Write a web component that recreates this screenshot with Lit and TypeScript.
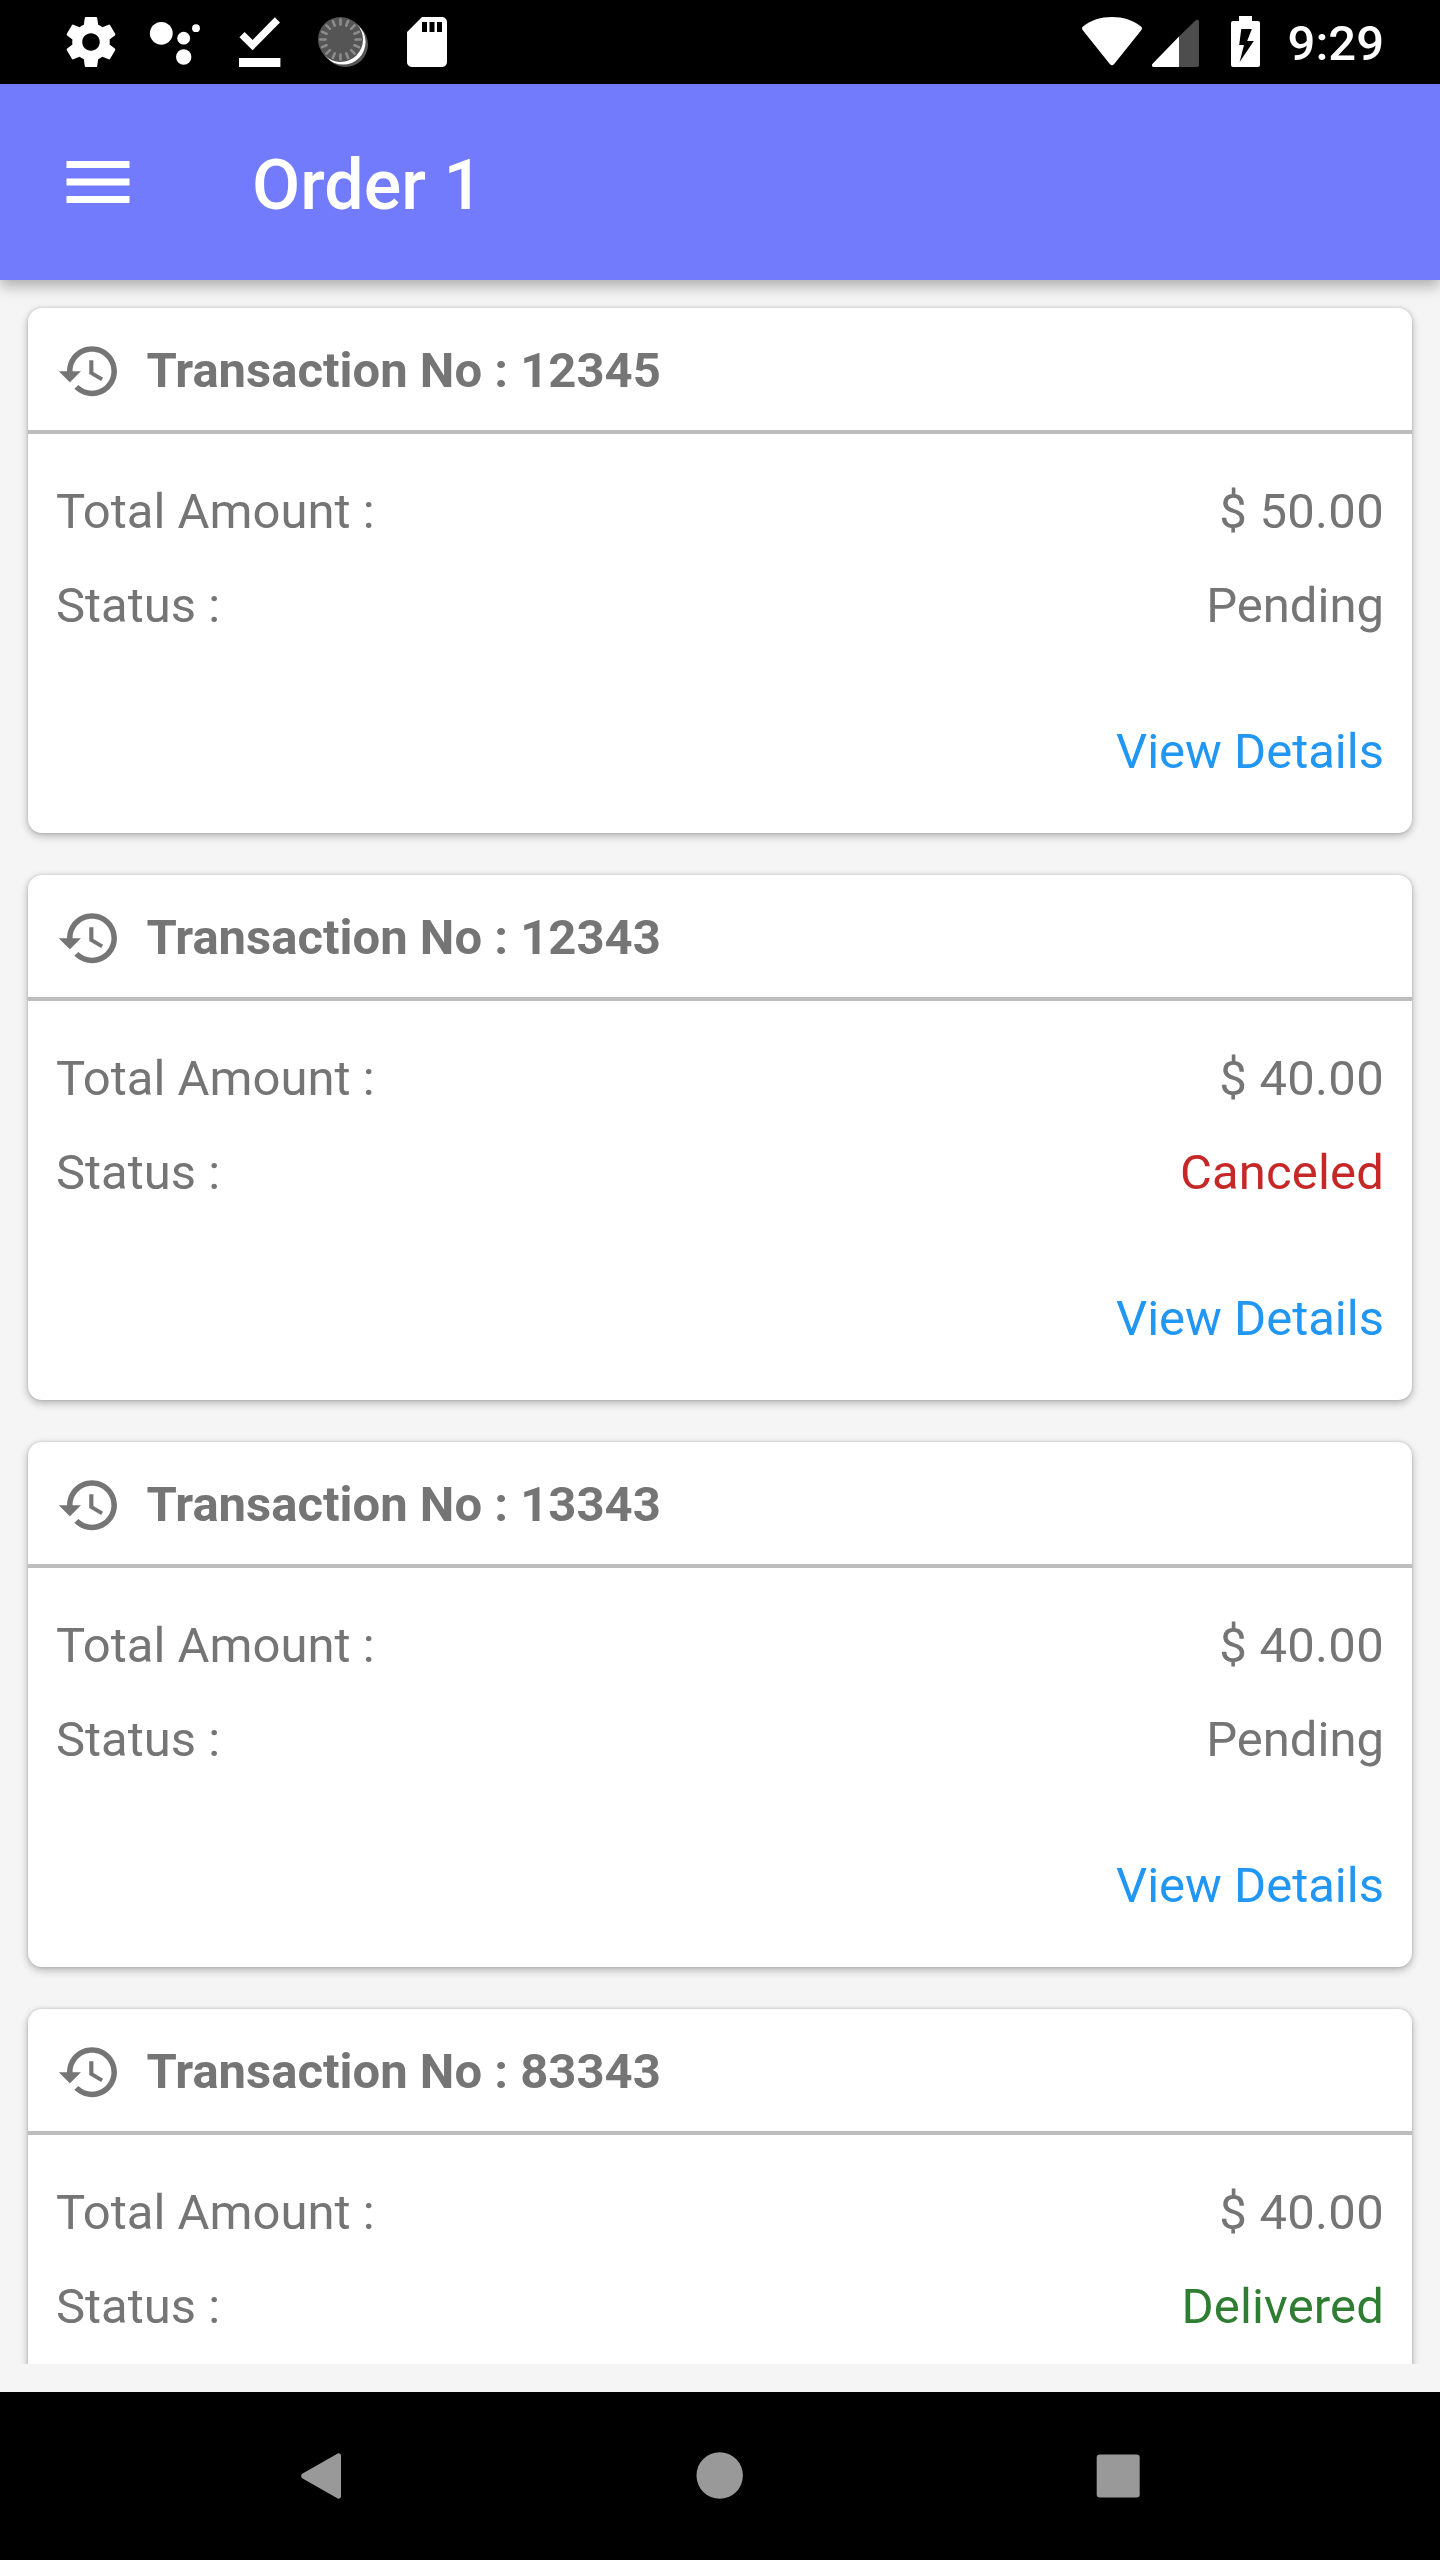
import { LitElement, html, css, svg } from "lit";
import { customElement, property } from "lit/decorators.js";
import { classMap } from "lit/directives/class-map.js";

type Status = "Pending" | "Canceled" | "Delivered";

interface Order {
  no: string;
  amount: string;
  status: Status;
}

const ORDERS: Order[] = [
  { no: "12345", amount: "50.00", status: "Pending" },
  { no: "12343", amount: "40.00", status: "Canceled" },
  { no: "13343", amount: "40.00", status: "Pending" },
  { no: "83343", amount: "40.00", status: "Delivered" },
];

const TICKS = Array.from({ length: 16 }, (_, i) => i * 22.5);

@customElement("status-bar")
class StatusBar extends LitElement {
  static styles = css`
    :host {
      display: flex;
      justify-content: space-between;
      height: 84px;
      padding: 0 56px 0 61px;
      box-sizing: border-box;
      background: #000;
      color: #fff;
    }
    svg {
      display: block;
      flex: none;
    }
    .group {
      display: flex;
      align-items: center;
    }
    .left {
      gap: 24px;
    }
    .cell {
      margin-left: 10px;
    }
    .battery {
      margin-left: 32px;
    }
    .time {
      margin-left: 28px;
      padding-top: 3px;
      font: 500 49px/57px Roboto, sans-serif;
    }
  `;

  render() {
    return html`
      <div class="group left">
        <svg width="60" height="60" viewBox="0 0 24 24" fill="#fff">
          <path
            d="M19.43 12.98c.04-.32.07-.64.07-.98s-.03-.66-.07-.98l2.11-1.65c.19-.15.24-.42.12-.64l-2-3.46c-.12-.22-.39-.3-.61-.22l-2.49 1c-.52-.4-1.08-.73-1.69-.98l-.38-2.65C14.46 2.18 14.25 2 14 2h-4c-.25 0-.46.18-.49.42l-.38 2.65c-.61.25-1.17.59-1.69.98l-2.49-1c-.23-.09-.49 0-.61.22l-2 3.46c-.13.22-.07.49.12.64l2.11 1.65c-.04.32-.07.65-.07.98s.03.66.07.98l-2.11 1.65c-.19.15-.24.42-.12.64l2 3.46c.12.22.39.3.61.22l2.49-1c.52.4 1.08.73 1.69.98l.38 2.65c.03.24.24.42.49.42h4c.25 0 .46-.18.49-.42l.38-2.65c.61-.25 1.17-.59 1.69-.98l2.49 1c.23.09.49 0 .61-.22l2-3.46c.12-.22.07-.49-.12-.64l-2.11-1.65zM12 15.5c-1.93 0-3.5-1.57-3.5-3.5s1.57-3.5 3.5-3.5 3.5 1.57 3.5 3.5-1.57 3.5-3.5 3.5z"
          />
        </svg>
        <svg width="60" height="60" viewBox="0 0 60 60" fill="#fff">
          <circle cx="16.3" cy="21.3" r="11.4" />
          <circle cx="38.7" cy="26.2" r="6.4" />
          <circle cx="51" cy="16.2" r="3.9" />
          <circle cx="38.7" cy="45" r="7.7" />
        </svg>
        <svg width="60" height="60" viewBox="0 0 60 60" fill="#fff">
          <path d="M10.4 25.2 15.6 20 23.6 28 45.8 5.2 51 10.4 23.6 38.2zM10 46h41.4v9H10z" />
        </svg>
        <svg width="60" height="60" viewBox="0 0 60 60">
          <circle cx="32.5" cy="32.5" r="22.5" fill="#555" />
          <circle cx="30" cy="30" r="22.6" fill="#fff" />
          <circle cx="27.5" cy="27.5" r="22.5" fill="#555" />
          <g stroke="#8c8c8c" stroke-width="2.6" stroke-linecap="round">
            ${TICKS.map(
              (a) => svg`<path d="M27.5 7.500v5" transform=${`rotate(${a} 27.5 27.5)`} />`
            )}
          </g>
        </svg>
        <svg width="60" height="60" viewBox="0 0 24 24" fill="#fff">
          <path
            d="M18 2h-8L4.02 8 4 20c0 1.1.9 2 2 2h12c1.1 0 2-.9 2-2V4c0-1.1-.9-2-2-2zm-6 6h-2V4h2v4zm3 0h-2V4h2v4zm3 0h-2V4h2v4z"
          />
        </svg>
      </div>
      <div class="group">
        <svg width="60" height="50" viewBox="0 0 60 50" fill="#fff">
          <path d="M1 9.400C9 3.200 19 0 30 0s21 3.200 29 9.400c1.200 1 1.300 2.400.4 3.600L32 47.300c-1.100 1.400-2.900 1.400-4 0L.6 13c-.9-1.200-.8-2.600.4-3.600z" />
        </svg>
        <svg class="cell" width="47" height="50" viewBox="0 0 47 50">
          <path d="M47 5v43a2 2 0 0 1-2 2H27V19.500L43.500 3.500C45 2.200 47 3 47 5z" fill="#4d4d4d" />
          <path d="M27 19.500V50H1.800c-1.800 0-2.500-2-1.200-3.300z" fill="#fff" />
        </svg>
        <svg class="battery" width="29" height="52" viewBox="0 0 29 52">
          <path d="M8 0h13v5h6a2 2 0 0 1 2 2v42a2 2 0 0 1-2 2H2a2 2 0 0 1-2-2V7a2 2 0 0 1 2-2h6z" fill="#fff" />
          <path d="M10.300 13h10.500l-4.600 12h6.600L8.600 46l4.400-17H8.200z" fill="#000" />
        </svg>
        <span class="time">9:29</span>
      </div>
    `;
  }
}

@customElement("order-card")
class OrderCard extends LitElement {
  static styles = css`
    :host {
      display: block;
      flex: none;
      height: 525px;
      border-radius: 14px;
      background: #fff;
      color: #757575;
      font: 400 49px/58px Roboto, sans-serif;
      box-shadow: 0 3px 8px rgba(0, 0, 0, 0.28), 0 0 3px rgba(0, 0, 0, 0.16);
    }
    .head {
      display: flex;
      align-items: center;
      gap: 24px;
      height: 126px;
      padding: 4px 28px 0;
      box-sizing: border-box;
      border-bottom: 4px solid #bdbdbd;
      font-weight: 700;
    }
    .head svg {
      flex: none;
    }
    .body {
      display: flex;
      flex-direction: column;
      gap: 36px;
      padding: 49px 28px 0;
    }
    .row {
      display: flex;
      justify-content: space-between;
    }
    .link {
      align-self: flex-end;
      margin-top: 52px;
      color: #2196f3;
    }
    .amount {
      letter-spacing: 0.3px;
    }
    .canceled {
      color: #c62828;
      letter-spacing: 0.15px;
    }
    .delivered {
      color: #2e7d32;
      letter-spacing: 0.15px;
    }
  `;

  @property({ attribute: false }) order!: Order;

  render() {
    const { no, amount, status } = this.order;
    return html`
      <div class="head">
        <svg width="66.5" height="66.5" viewBox="0 0 24 24" fill="#757575">
          <path
            d="M13 3c-4.970 0-9 4.030-9 9H1l3.890 3.890.07.14L9 12H6c0-3.870 3.130-7 7-7s7 3.130 7 7-3.130 7-7 7c-1.930 0-3.680-.79-4.940-2.060l-1.420 1.420C8.270 19.990 10.510 21 13 21c4.970 0 9-4.030 9-9s-4.030-9-9-9zm-1 5v5l4.280 2.540.72-1.210-3.500-2.080V8H12z"
          />
        </svg>
        <span>Transaction No : ${no}</span>
      </div>
      <div class="body">
        <div class="row"><span>Total Amount :</span><span class="amount">$ ${amount}</span></div>
        <div class="row">
          <span>Status :</span>
          <span
            class=${classMap({
              canceled: status === "Canceled",
              delivered: status === "Delivered",
            })}
            >${status}</span
          >
        </div>
        <span class="link">View Details</span>
      </div>
    `;
  }
}

@customElement("nav-bar")
class NavBar extends LitElement {
  static styles = css`
    :host {
      display: flex;
      align-items: center;
      justify-content: center;
      gap: 338px;
      height: 168px;
      background: #000;
    }
    svg {
      display: block;
    }
  `;

  render() {
    return html`
      <svg width="60" height="60" viewBox="0 0 60 60" fill="#999">
        <path d="M45.300 7.800C47 6.800 49 7.600 49 9.800v40.400c0 2.200-2 3-3.700 2L10.600 32.400c-2-1.200-2-3.600 0-4.800z" />
      </svg>
      <svg width="60" height="60" viewBox="0 0 60 60" fill="#999">
        <circle cx="29.700" cy="29.500" r="23.200" />
      </svg>
      <svg width="60" height="60" viewBox="0 0 60 60" fill="#999">
        <rect x="8.700" y="8.400" width="43" height="43" rx="3" />
      </svg>
    `;
  }
}

@customElement("app-root")
class AppRoot extends LitElement {
  static styles = css`
    :host {
      display: flex;
      flex-direction: column;
      width: 1440px;
      height: 2560px;
      overflow: hidden;
      background: #f5f5f5;
    }
    .appbar {
      display: flex;
      align-items: center;
      gap: 112px;
      flex: none;
      height: 196px;
      padding: 0 56px;
      box-sizing: border-box;
      background: #727bfb;
      color: #fff;
      box-shadow: 0 6px 14px rgba(0, 0, 0, 0.3);
      z-index: 1;
    }
    .title {
      margin: 6px 0 0;
      font: 500 70px/82px Roboto, sans-serif;
    }
    .list {
      display: flex;
      flex-direction: column;
      gap: 42px;
      flex: 1;
      min-height: 0;
      margin-bottom: 28px;
      padding: 28px 28px 0;
      overflow: hidden;
    }
  `;

  render() {
    return html`
      <status-bar></status-bar>
      <header class="appbar">
        <svg width="84" height="84" viewBox="0 0 24 24" fill="#fff">
          <path d="M3 18h18v-2H3v2zm0-5h18v-2H3v2zm0-7v2h18V6H3z" />
        </svg>
        <h1 class="title">Order 1</h1>
      </header>
      <main class="list">
        ${ORDERS.map((order) => html`<order-card .order=${order}></order-card>`)}
      </main>
      <nav-bar></nav-bar>
    `;
  }
}
